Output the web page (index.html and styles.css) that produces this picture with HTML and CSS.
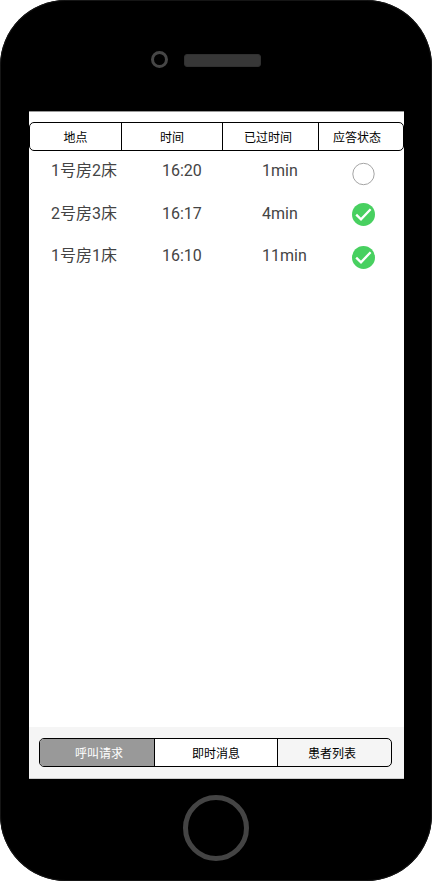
FILE: index.html
```html
<!DOCTYPE html>
<html lang="zh-CN">
<head>
<meta charset="utf-8">
<title>呼叫请求</title>
<link rel="stylesheet" href="styles.css">
</head>
<body>
<div class="phone">
  <div class="phone-top">
    <span class="camera"></span>
    <span class="speaker"></span>
  </div>
  <main class="screen">
    <div class="columns head">
      <span>地点</span><span>时间</span><span class="elapsed">已过时间</span><span>应答状态</span>
    </div>
    <div class="calls">
      <div class="call">
        <span>1号房2床</span><span>16:20</span><span>1min</span>
        <svg class="status pending" viewBox="0 0 24 24"><circle cx="11.5" cy="12" r="10.7" fill="#fff" stroke="#a5a5a5"/></svg>
      </div>
      <div class="call">
        <span>2号房3床</span><span>16:17</span><span>4min</span>
        <svg class="status" viewBox="0 0 24 24"><circle cx="11.5" cy="12.4" r="11.5" fill="#48d060"/><path d="M4.2 12.6l4.8 4.7L18.6 7.2" fill="none" stroke="#fff" stroke-width="2.3"/></svg>
      </div>
      <div class="call">
        <span>1号房1床</span><span>16:10</span><span>11min</span>
        <svg class="status last" viewBox="0 0 24 24"><circle cx="11.5" cy="12.4" r="11.5" fill="#48d060"/><path d="M4.2 12.6l4.8 4.7L18.6 7.2" fill="none" stroke="#fff" stroke-width="2.3"/></svg>
      </div>
    </div>
    <nav class="tabbar">
      <div class="columns tabs">
        <span class="active">呼叫请求</span><span class="messages">即时消息</span><span>患者列表</span>
      </div>
    </nav>
  </main>
  <div class="home"></div>
</div>
</body>
</html>
```
FILE: styles.css
```css
* { box-sizing: border-box; }
body {
  margin: 0;
  background: #fff;
  font-family: Roboto, "Noto Sans CJK SC", sans-serif;
}
.phone {
  display: flex;
  flex-direction: column;
  width: 432px;
  height: 881px;
  padding: 0 28px 0 29px;
  background: #000;
  border-radius: 66px;
  box-shadow: inset 0 0 0 1px #151515;
}
.phone-top {
  display: flex;
  height: 111px;
  padding: 51px 0 0 122px;
  gap: 16px;
}
.camera {
  width: 17px;
  height: 17px;
  border: 3px solid #464646;
  border-radius: 50%;
}
.speaker {
  width: 77px;
  height: 13px;
  margin-top: 3px;
  background: #373737;
  border: 1px solid #303030;
  border-radius: 3px;
}
.screen {
  display: flex;
  flex-direction: column;
  height: 668px;
  padding-top: 11px;
  background: #fff;
  box-shadow: inset 0 1px #999;
}
.columns {
  display: grid;
  height: 29px;
  border: 1px solid #000;
  border-radius: 5px;
  overflow: hidden;
  color: #000;
  font-size: 12px;
  line-height: 30px;
  text-align: center;
}
.columns span {
  height: 27px;
}
.columns span + span { border-left: 1px solid #000; }
.head { grid-template-columns: 91px 101px 96px 1fr; }
.head .elapsed { padding-right: 5px; }
.head span:last-child { padding-right: 8px; }
.calls {
  display: grid;
  grid-template-rows: 43px 42px 43px;
  flex: 1;
  align-content: start;
  color: #444;
  font-size: 16px;
  line-height: 24px;
}
.call {
  display: grid;
  grid-template-columns: 111px 100px 90px 24px;
  padding: 8px 0 0 22px;
  align-items: start;
}
.status {
  width: 24px;
  height: 24px;
}
.pending { margin-top: 3px; }
.last { margin-top: 1px; }
.tabbar {
  height: 52px;
  padding: 11px 12px 0 10px;
  background: #f5f5f5;
  box-shadow: inset 0 -1px #ccc;
}
.tabs { grid-template-columns: 114px 123px 1fr; }
.tabs span:last-child { padding-right: 5px; }
.tabs .active {
  padding-left: 4px;
  background: #999;
  color: #fff;
}
.messages { background: #fff; }
.home {
  width: 66px;
  height: 66px;
  margin: 16px 0 0 154px;
  border: 5px solid #444;
  border-radius: 50%;
}
```
